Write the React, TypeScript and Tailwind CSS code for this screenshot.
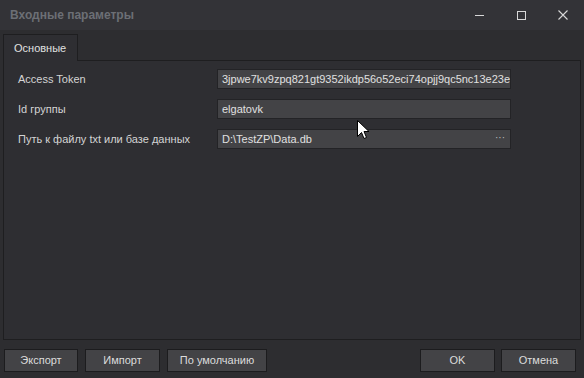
import React from "react";

const font = { fontFamily: '"Liberation Sans", "DejaVu Sans", sans-serif' };

function Row({ label, value, ellipsis }: { label: string; value: string; ellipsis?: boolean }) {
  return (
    <div className="flex items-center h-[20px]">
      <div className="w-[199px] text-[11px] text-[#d4d4d4] whitespace-nowrap">{label}</div>
      <div className="relative w-[294px] h-[20px] bg-[#434346] border border-[#232326] flex items-center pl-[4px] text-[11px] text-[#e0e0e0] whitespace-nowrap overflow-hidden">
        {value}
        {ellipsis && (
          <span className="absolute right-[5px] top-[3px] text-[10px] text-[#bdbdbd] leading-none">···</span>
        )}
      </div>
    </div>
  );
}

function Btn({ label, w }: { label: string; w: string }) {
  return (
    <div
      className={`${w} h-[23px] bg-[#434346] border border-[#1c1c1e] flex items-center justify-center text-[11px] text-[#dcdcdc]`}
    >
      {label}
    </div>
  );
}

export default function App() {
  return (
    <div className="relative w-[584px] h-[378px] bg-[#2d2d30] flex flex-col overflow-hidden" style={font}>
      <div className="h-[30px] bg-[#333337] flex items-center pl-[10px]">
        <span className="text-[12px] font-bold text-[#6c6f75]">Входные параметры</span>
        <div className="ml-auto flex items-center h-full">
          <div className="w-[42px] flex justify-center">
            <div className="w-[9px] h-[1px] bg-[#d8d8d8]" />
          </div>
          <div className="w-[42px] flex justify-center">
            <div className="w-[9px] h-[9px] border border-[#d8d8d8]" />
          </div>
          <div className="w-[42px] flex justify-center">
            <svg width="10" height="10" viewBox="0 0 10 10">
              <path d="M0.5 0.5 L9.5 9.5 M9.5 0.5 L0.5 9.5" stroke="#d8d8d8" strokeWidth="1.1" />
            </svg>
          </div>
        </div>
      </div>
      <div className="flex flex-col px-[3px] pt-[4px]">
        <div className="flex">
          <div className="w-[75px] h-[27px] border border-b-0 border-[#1e1e20] bg-[#2e2e32] -mb-[1px] relative z-10 flex items-center pl-[10px] text-[11px] text-[#e0e0e0]">
            Основные
          </div>
        </div>
        <div className="h-[280px] border border-[#1e1e20] bg-[#2e2e32] flex flex-col gap-[10px] pt-[8px] pl-[14px]">
          <Row label="Access Token" value="3jpwe7kv9zpq821gt9352ikdp56o52eci74opjj9qc5nc13e23e" />
          <Row label="Id группы" value="elgatovk" />
          <Row label="Путь к файлу txt или базе данных" value="D:\TestZP\Data.db" ellipsis />
        </div>
      </div>
      <div className="flex items-center pt-[9px] pl-[4px] pr-[8px]">
        <div className="flex gap-[7px]">
          <Btn label="Экспорт" w="w-[74px]" />
          <Btn label="Импорт" w="w-[75px]" />
          <Btn label="По умолчанию" w="w-[100px]" />
        </div>
        <div className="ml-auto flex gap-[6px]">
          <Btn label="OK" w="w-[75px]" />
          <Btn label="Отмена" w="w-[75px]" />
        </div>
      </div>
      <svg className="absolute left-[357px] top-[120px]" width="13" height="21" viewBox="0 0 13 21">
        <path
          d="M0.5 0.5 L0.5 16.5 L4.5 12.5 L7 18.5 L9.5 17.5 L7 11.5 L12 11.5 Z"
          fill="#ffffff"
          stroke="#000000"
          strokeWidth="1"
          strokeLinejoin="miter"
        />
      </svg>
    </div>
  );
}
